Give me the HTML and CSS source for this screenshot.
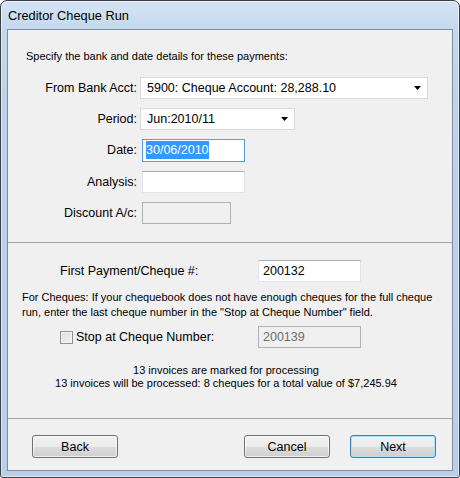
FILE: index.html
```html
<!DOCTYPE html>
<html lang="en">
<head>
    <meta charset="UTF-8">
    <title>Creditor Cheque Run</title>
    <link rel="stylesheet" href="styles.css">
</head>
<body>
    <div class="window">
        <div class="titlebar">Creditor Cheque Run</div>
        <div class="client">
            <p class="intro">Specify the bank and date details for these payments:</p>
            <div class="form-grid">
                <span class="label">From Bank Acct:</span>
                <div class="select select-wide">
                    <span>5900: Cheque Account: 28,288.10</span>
                    <svg class="arrow" width="7" height="4" viewBox="0 0 7 4"><path d="M0 0H7L3.5 4Z" fill="#000"/></svg>
                </div>

                <span class="label">Period:</span>
                <div class="select select-period">
                    <span>Jun:2010/11</span>
                    <svg class="arrow" width="7" height="4" viewBox="0 0 7 4"><path d="M0 0H7L3.5 4Z" fill="#000"/></svg>
                </div>

                <span class="label">Date:</span>
                <div class="textbox focused"><span class="selected">30/06/2010</span></div>

                <span class="label">Analysis:</span>
                <div class="textbox"></div>

                <span class="label">Discount A/c:</span>
                <div class="textbox textbox-short disabled"></div>
            </div>

            <div class="sep"></div>

            <div class="cheque-row first-row">
                <span class="label">First Payment/Cheque #:</span>
                <div class="textbox">200132</div>
            </div>
            <p class="note">For Cheques: If your chequebook does not have enough cheques for the full cheque<br>run, enter the last cheque number in the "Stop at Cheque Number" field.</p>
            <div class="cheque-row stop-row">
                <span class="label check"><span class="checkbox"></span>Stop at Cheque Number:</span>
                <div class="textbox disabled">200139</div>
            </div>
            <p class="summary">13 invoices are marked for processing<br>13 invoices will be processed: 8 cheques for a total value of $7,245.94</p>

            <div class="sep sep-bottom"></div>

            <div class="buttons">
                <button class="btn">Back</button>
                <span class="spacer"></span>
                <button class="btn">Cancel</button>
                <button class="btn default">Next</button>
            </div>
        </div>
    </div>
</body>
</html>
```

FILE: styles.css
```css
body {
    margin: 0;
    padding: 0;
    font-family: "Liberation Sans", Arial, sans-serif;
    color: #000;
}
.window {
    width: 460px;
    height: 478px;
    box-sizing: border-box;
    border: 1px solid #3a3f46;
    border-radius: 7px 7px 3px 3px;
    padding: 0 6px 6px 6px;
    background: linear-gradient(to bottom, #d4e4f4 0, #c3d8ee 30px, #bcd2ea 120px, #b8cfe8 100%);
    box-shadow: inset 0 0 0 1px rgba(255, 255, 255, 0.55);
}
.titlebar {
    height: 28px;
    line-height: 29px;
    font-size: 12.8px;
    padding-left: 1px;
}
.client {
    height: 442px;
    box-sizing: border-box;
    border: 1px solid #7d8ea3;
    background: #f0f0f0;
    padding-top: 19px;
}
p {
    margin: 0;
}
.intro {
    font-size: 11px;
    line-height: 14px;
    padding-left: 18px;
}
.label {
    font-size: 12.5px;
    line-height: 22px;
    white-space: nowrap;
}
.form-grid {
    display: grid;
    grid-template-columns: 129px auto;
    column-gap: 3px;
    row-gap: 9px;
    margin-top: 14px;
}
.form-grid .label {
    text-align: right;
}
.select {
    height: 22px;
    box-sizing: border-box;
    border: 1px solid #dadada;
    background: #fff;
    font-size: 12.5px;
    display: flex;
    align-items: center;
    justify-content: space-between;
    padding: 0 6px 0 6px;
}
.select-wide {
    width: 288px;
}
.select-period {
    width: 155px;
}
.textbox {
    width: 103px;
    height: 22px;
    box-sizing: border-box;
    border: 1px solid #e2e3ea;
    border-top-color: #abadb3;
    background: #fff;
    font-size: 12.5px;
    line-height: 20px;
    padding-left: 4px;
    margin-left: 2px;
}
.textbox.focused {
    border-color: #569de5;
    height: 23px;
    padding-left: 3px;
}
.textbox-short {
    width: 89px;
}
.textbox.disabled {
    background: #f0f0f0;
    border-color: #adb2b5;
    color: #6d6d6d;
}
.selected {
    background: #3399ff;
    color: #fff;
    padding: 2px 0;
}
.sep {
    height: 0;
    border-top: 1px solid #a0a0a0;
    margin-top: 18px;
}
.cheque-row {
    display: grid;
    grid-template-columns: 198px auto;
    padding-left: 52px;
}
.cheque-row .textbox {
    margin-left: 0;
}
.first-row {
    margin-top: 17px;
}
.note {
    font-size: 11px;
    line-height: 15px;
    padding-left: 14px;
    margin-top: 8px;
}
.stop-row {
    margin-top: 6px;
}
.check {
    display: flex;
    align-items: center;
    gap: 3px;
}
.checkbox {
    width: 13px;
    height: 13px;
    box-sizing: border-box;
    border: 1px solid #8f8f8f;
    background: linear-gradient(135deg, #dcdcdc, #f6f6f6);
    box-shadow: inset 0 0 0 1px #f4f4f4;
}
.summary {
    font-size: 11px;
    line-height: 13px;
    text-align: center;
    margin-top: 16px;
    padding-right: 8px;
}
.sep-bottom {
    margin-top: 28px;
}
.buttons {
    display: flex;
    align-items: center;
    gap: 20px;
    margin-top: 16px;
    padding: 0 16px 0 24px;
}
.spacer {
    flex: 1;
}
.btn {
    width: 86px;
    height: 23px;
    box-sizing: border-box;
    border: 1px solid #707070;
    border-radius: 3px;
    background: linear-gradient(to bottom, #f2f2f2 0, #ebebeb 50%, #dddddd 50%, #cfcfcf 100%);
    box-shadow: inset 0 0 0 1px rgba(255, 255, 255, 0.7);
    font-family: "Liberation Sans", Arial, sans-serif;
    font-size: 12.5px;
    color: #000;
    padding: 0;
}
.btn.default {
    border-color: #3c7fb1;
    box-shadow: inset 0 0 0 1px #a6e3fb;
}
```
